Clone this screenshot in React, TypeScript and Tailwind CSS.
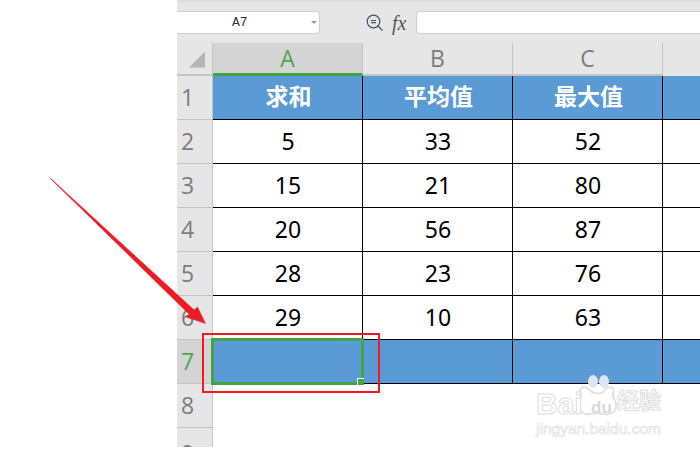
const sans = "[font-family:'Liberation_Sans','Noto_Sans_CJK_SC',sans-serif]";

const rows = [
  ["5", "33", "52"],
  ["15", "21", "80"],
  ["20", "56", "87"],
  ["28", "23", "76"],
  ["29", "10", "63"],
];

function RowHead({ n, active }: { n: string; active?: boolean }) {
  return (
    <div
      className={`h-11 w-9 shrink-0 flex items-center justify-center border-r border-b border-[#c4c4c4] text-[23px] ${
        active ? "bg-[#d4d4d4] text-[#4aa84a]" : "bg-[#e6e6e6] text-[#7c7c7c]"
      }`}
    >
      <span className="pr-[14px] [font-family:'Open_Sans',sans-serif]">{n}</span>
    </div>
  );
}

function Cell({ children, className = "", last }: { children?: React.ReactNode; className?: string; last?: boolean }) {
  return (
    <div
      className={`h-11 flex items-center justify-center text-[23px] border-b border-black ${
        last ? "flex-1" : "w-[150px] border-r"
      } ${className}`}
    >
      {children}
    </div>
  );
}

function ColHead({ label, active }: { label: string; active?: boolean }) {
  return (
    <div
      className={`w-[150px] h-[33px] flex items-center justify-center text-[23px] [font-family:'Open_Sans',sans-serif] border-r border-[#c4c4c4] ${
        active ? "bg-[#d4d4d4] text-[#4aa84a] border-b-[3px] border-b-[#41a447]" : "border-b-2 border-b-[#c4c4c4] text-[#7c7c7c]"
      }`}
    >
      {label}
    </div>
  );
}

export default function App() {
  return (
    <div className={`relative w-[700px] h-[450px] overflow-hidden bg-white ${sans}`}>
      <div className="ml-[177px] h-[447px] flex flex-col">
        {/* formula bar */}
        <div className="h-[43px] bg-[#e6e6e6] border-t-2 border-[#dedede] flex items-center shrink-0">
          <div className="w-[143px] h-[23px] bg-white rounded-r-[4px] border border-l-0 border-[#cfcfcf] flex items-center relative">
            <span className="ml-[55px] text-[13px] text-[#333] [font-family:'Liberation_Mono',monospace]">A7</span>
            <span className="absolute right-[2px] top-[9px] w-0 h-0 border-x-[3px] border-x-transparent border-t-[3px] border-t-[#999]" />
          </div>
          <svg className="ml-[46px]" width="18" height="18" viewBox="0 0 18 18" fill="none" stroke="#4b5163" strokeWidth="1.2">
            <circle cx="7.5" cy="7.5" r="6.3" />
            <path d="M5 6.5h5M5 8.7h5M12 12l4.5 4.5" />
          </svg>
          <span className="ml-[8px] w-[16px] text-[20px] italic text-[#555] [font-family:'Liberation_Serif',serif]">fx</span>
          <div className="ml-[8px] flex-1 h-[23px] bg-white rounded-l-[4px] border border-r-0 border-[#cfcfcf]" />
        </div>
        {/* column headers */}
        <div className="flex shrink-0 bg-[#e6e6e6]">
          <div className="w-9 h-[33px] border-r border-[#c4c4c4] border-b-2 border-b-[#c4c4c4] flex items-center justify-center">
            <div className="mt-[2px] ml-[5px] w-4 h-4 bg-[#b5b5b5] [clip-path:polygon(100%_0,100%_100%,0_100%)]" />
          </div>
          <ColHead label="A" active />
          <ColHead label="B" />
          <ColHead label="C" />
        </div>
        {/* header row */}
        <div className="flex shrink-0">
          <RowHead n="1" />
          {["求和", "平均值", "最大值"].map((t) => (
            <Cell key={t} className="bg-[#5b9bd5] text-white font-bold text-[21px] pl-[2px]">
              {t}
            </Cell>
          ))}
          <Cell last className="bg-[#5b9bd5]" />
        </div>
        {rows.map((r, i) => (
          <div key={i} className="flex shrink-0">
            <RowHead n={String(i + 2)} />
            {r.map((v, j) => (
              <Cell key={j} className="text-black [font-family:'Noto_Sans',sans-serif] pl-px">
                {v}
              </Cell>
            ))}
            <Cell last />
          </div>
        ))}
        {/* selected row */}
        <div className="flex shrink-0">
          <RowHead n="7" active />
          <Cell className="bg-[#5b9bd5] relative">
            <div className="absolute left-[-2px] top-[-2px] w-[153px] h-[47px] border-[3px] border-[#41a447]" />
            <div className="absolute right-[-2px] bottom-[-2px] w-[7px] h-[7px] bg-[#41a447] border-l border-t border-white" />
          </Cell>
          <Cell className="bg-[#5b9bd5]" />
          <Cell className="bg-[#5b9bd5]" />
          <Cell last className="bg-[#5b9bd5]" />
        </div>
        <div className="flex shrink-0">
          <RowHead n="8" />
        </div>
        <div className="flex flex-1 min-h-0">
          <div className="w-9 bg-[#e6e6e6] border-r border-[#c4c4c4] overflow-hidden text-center">
            <div className="mt-[14px] pr-[14px] text-[23px] leading-none text-[#7c7c7c] [font-family:'Open_Sans',sans-serif]">9</div>
          </div>
        </div>
      </div>

      {/* annotations */}
      <div className="absolute left-[202px] top-[333px] w-[178px] h-[60px] border-2 border-[#ed1c24]" />
      <svg className="absolute left-0 top-0 pointer-events-none" width="700" height="450" fill="none">
        <path d="M50.5 178.5 L194 310 L190 315 Z" fill="#ed1c24" stroke="#ed1c24" strokeWidth="0.8" strokeLinejoin="round" />
        <path d="M205.5 323.5 L197.5 307 L186 317 Z" fill="#ed1c24" stroke="#ed1c24" strokeWidth="0.5" />
      </svg>

      {/* watermark */}
      <div className="absolute left-[536px] top-[375px] w-[140px] h-[60px]">
        <svg className="absolute left-[40px] top-0" width="44" height="44" viewBox="0 0 44 44" fill="none">
          <path d="M8 12 C4 12 3 17 5 20 C6 23 3 26 3 30 C3 37 9 40 14 39 C18 38 24 38 28 39 C34 40 41 37 40 30 C40 25 36 23 37 19 C39 15 37 12 33 12 C30 12 29 15 27 17 C24 19 18 19 15 16 C13 14 11 12 8 12Z" fill="#fff" stroke="#e2e2e2" strokeWidth="2" />
          <ellipse cx="17" cy="6.5" rx="5" ry="6.5" fill="#dbe6f2" />
          <ellipse cx="28" cy="6.5" rx="5" ry="6.5" fill="#dbe6f2" />
        </svg>
        <span className="absolute left-0 top-[14px] text-[30px] leading-none font-bold text-white [-webkit-text-stroke:1px_#dedede]">Bai</span>
        <span className="absolute left-[55px] top-[24px] text-[17px] leading-none font-bold text-[#d9d9d9]">du</span>
        <span className="absolute left-[81px] top-[15px] text-[22px] leading-none font-bold text-white [-webkit-text-stroke:1px_#dedede]">经验</span>
        <span className="absolute left-0 top-[46px] text-[15.5px] leading-none text-white [-webkit-text-stroke:0.7px_#e2e2e2]">jingyan.baidu.com</span>
      </div>
    </div>
  );
}
